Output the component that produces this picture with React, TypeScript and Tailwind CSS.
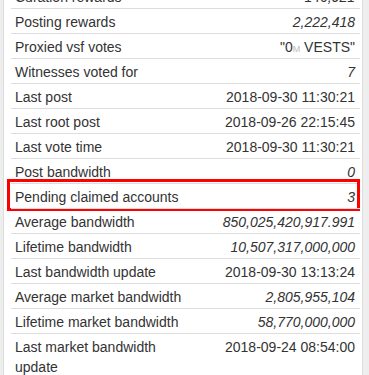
import type { ReactNode } from 'react';

type Row = { label: string; value: ReactNode; italic?: boolean; highlight?: boolean };

const rows: Row[] = [
  { label: 'Curation rewards', value: '146,921', italic: true },
  { label: 'Posting rewards', value: '2,222,418', italic: true },
  {
    label: 'Proxied vsf votes',
    value: (
      <>
        "0<span className="text-[9px] leading-none text-[#bbb]">M</span> VESTS"
      </>
    ),
  },
  { label: 'Witnesses voted for', value: '7', italic: true },
  { label: 'Last post', value: '2018-09-30 11:30:21' },
  { label: 'Last root post', value: '2018-09-26 22:15:45' },
  { label: 'Last vote time', value: '2018-09-30 11:30:21' },
  { label: 'Post bandwidth', value: '0', italic: true },
  { label: 'Pending claimed accounts', value: '3', italic: true, highlight: true },
  { label: 'Average bandwidth', value: '850,025,420,917.991', italic: true },
  { label: 'Lifetime bandwidth', value: '10,507,317,000,000', italic: true },
  { label: 'Last bandwidth update', value: '2018-09-30 13:13:24' },
  { label: 'Average market bandwidth', value: '2,805,955,104', italic: true },
  { label: 'Lifetime market bandwidth', value: '58,770,000,000', italic: true },
  { label: 'Last market bandwidth update', value: '2018-09-24 08:54:00' },
];

const App = () => {
  return (
    <div
      className="h-[375px] overflow-hidden bg-[#eeeeee] pl-[3px] pr-[6px] text-[14px] leading-5 text-[#333]"
      style={{ fontFamily: '"Liberation Sans", Arial, sans-serif' }}
    >
      <div className="-mt-[18px] border border-[#dddddd] bg-white pl-[7px] pr-[2px]">
        {rows.map(row => (
          <div key={row.label} className="relative flex min-h-[25px] border-t border-[#dddddd] pt-[3px] pb-[1px]">
            <div className="w-[186px] shrink-0 px-1">{row.label}</div>
            <div className={`h-5 flex-1 whitespace-nowrap pr-[5px] text-right ${row.italic ? 'italic' : ''}`}>
              {row.value}
            </div>
            {row.highlight && (
              <div className="pointer-events-none absolute -top-[5px] -bottom-[3px] -left-[4px] right-0 border-[3px] border-[#ff0000]" />
            )}
          </div>
        ))}
      </div>
    </div>
  );
};

export default App;
